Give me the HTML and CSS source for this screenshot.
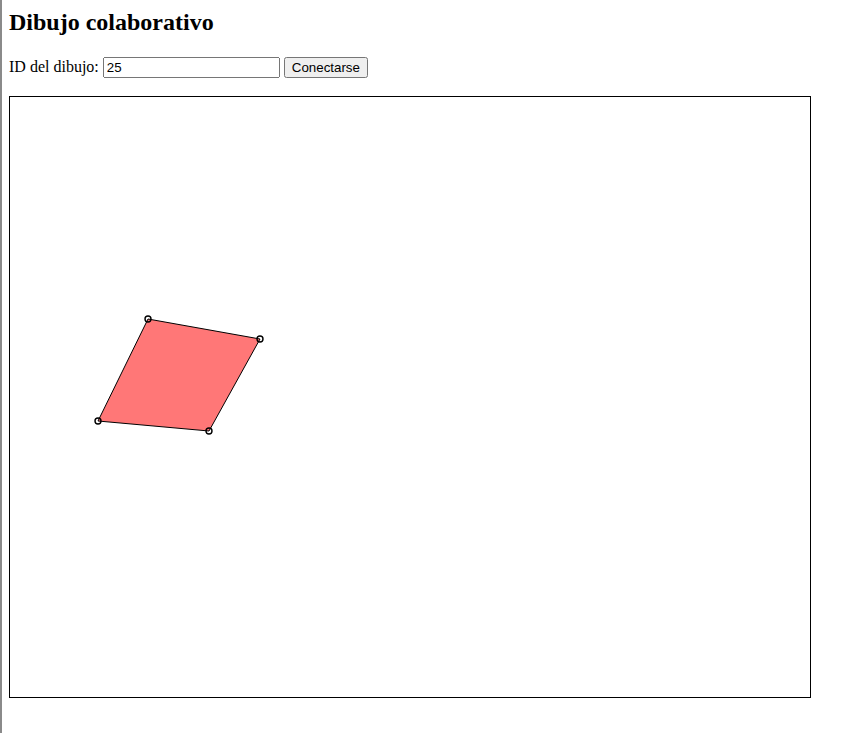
FILE: index.html
```html
<!DOCTYPE html>
<html>
<head>
<meta charset="utf-8">
<title>Dibujo colaborativo</title>
<link rel="stylesheet" href="styles.css">
</head>
<body>
<div class="frame-edge"></div>
<h2 class="title">Dibujo colaborativo</h2>
<div class="controls">
  <label for="drawing-id">ID del dibujo:</label> <input id="drawing-id" class="id-input" type="text" value="25"> <button class="connect">Conectarse</button>
</div>
<div class="board-wrap">
  <svg class="board" width="800" height="600" viewBox="0 0 800 600">
    <polygon points="138,222 250,242 199,334 88,324" fill="#ff7777" stroke="#000" stroke-width="1"/>
    <circle class="handle" cx="138" cy="222" r="3"/>
    <circle class="handle" cx="250" cy="242" r="3"/>
    <circle class="handle" cx="199" cy="334" r="3"/>
    <circle class="handle" cx="88" cy="324" r="3"/>
  </svg>
</div>
</body>
</html>
```
FILE: styles.css
```css
html {
  background: #fff;
}
body {
  margin: 9px 8px 8px 9px;
  font-family: "Liberation Serif", "Times New Roman", serif;
  font-size: 16px;
  color: #000;
}
.frame-edge {
  position: fixed;
  left: 0;
  top: 0;
  width: 2px;
  height: 733px;
  background: #8a8a8a;
}
.title {
  font-size: 24px;
  font-weight: bold;
  margin: 0 0 21px 0;
}
.controls {
  margin: 0 0 18px 0;
}
.id-input {
  box-sizing: border-box;
  width: 177px;
  font-family: "Liberation Sans", Arial, sans-serif;
  font-size: 13.333px;
}
.connect {
  font-family: "Liberation Sans", Arial, sans-serif;
  font-size: 13.333px;
}
.board-wrap {
  line-height: 0;
}
.board {
  border: 1px solid #000;
  background: #fff;
  display: inline-block;
}
.handle {
  fill: none;
  stroke: #000;
  stroke-width: 1.4;
}
```
